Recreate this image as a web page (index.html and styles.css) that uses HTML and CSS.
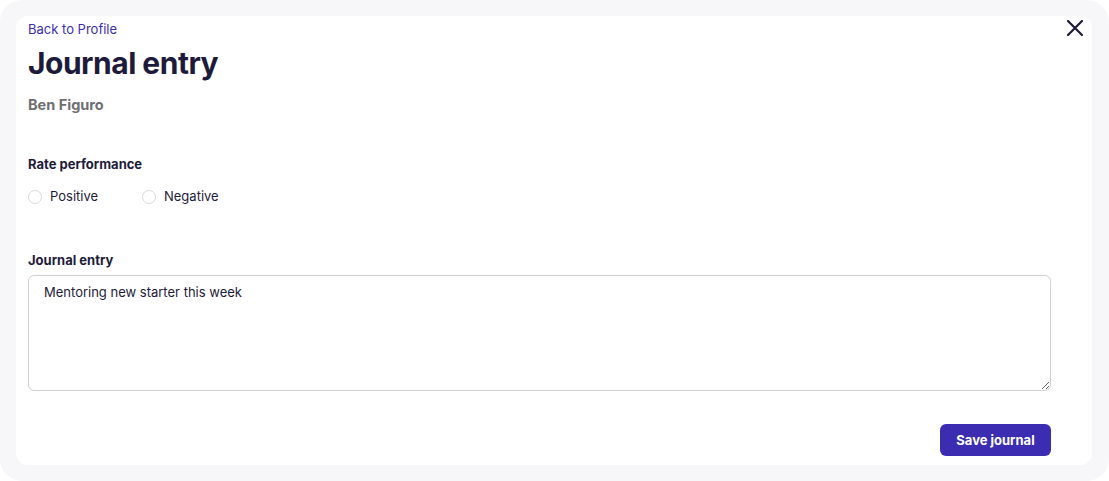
FILE: index.html
```html
<!DOCTYPE html>
<html lang="en">
<head>
  <meta charset="UTF-8">
  <meta name="viewport" content="width=device-width, initial-scale=1.0">
  <link rel="stylesheet" href="styles.css">
</head>
<body>
  <div class="frame">
    <form class="card" id="journal-form">
      <button type="button" class="close" aria-label="Close">
        <svg width="18" height="18" viewBox="0 0 18 18"><path d="M2 2L16 16M16 2L2 16" stroke="#1e1b3a" stroke-width="2.2" stroke-linecap="round"/></svg>
      </button>
      <a href="#" class="back">Back to Profile</a>
      <h1>Journal entry</h1>
      <div class="name">Ben Figuro</div>

      <div class="label rate-label">Rate performance</div>
      <div class="radios">
        <label class="radio"><input type="radio" name="rate" value="positive"><span>Positive</span></label>
        <label class="radio"><input type="radio" name="rate" value="negative"><span>Negative</span></label>
      </div>

      <label class="label entry-label" for="entry">Journal entry</label>
      <textarea id="entry" name="entry">Mentoring new starter this week</textarea>

      <div class="actions">
        <button type="submit" class="save">Save journal</button>
      </div>
    </form>
  </div>
</body>
</html>
```

FILE: styles.css
```css
html, body {
  margin: 0;
  background: #ffffff;
}
body {
  font-family: Inter, "Liberation Sans", sans-serif;
  color: #1e1b3a;
}
.frame {
  background: #f7f7f9;
  border-radius: 22px;
  width: 1109px;
  height: 481px;
  box-sizing: border-box;
  padding: 16px 17px 16px 16px;
}
.card {
  position: relative;
  background: #ffffff;
  border-radius: 12px;
  height: 100%;
  box-sizing: border-box;
  padding: 5px 41px 0 12px;
  display: flex;
  flex-direction: column;
}
.close {
  position: absolute;
  top: 3px;
  right: 8px;
  background: none;
  border: none;
  padding: 0;
  width: 18px;
  height: 18px;
  cursor: pointer;
}
.back {
  color: #3b2cb2;
  font-size: 13px;
  line-height: 17px;
  text-decoration: none;
}
h1 {
  margin: 6px 0 0;
  font-size: 30px;
  line-height: 38px;
  font-weight: 700;
  letter-spacing: -0.5px;
  color: #1e1b3a;
}
.name {
  margin-top: 14px;
  font-size: 14.5px;
  line-height: 18px;
  font-weight: 700;
  color: #6e6e73;
}
.label {
  font-size: 13px;
  line-height: 17px;
  font-weight: 700;
  color: #1e1b3a;
}
.rate-label {
  margin-top: 42px;
}
.radios {
  display: flex;
  gap: 24px;
  margin-top: 15px;
}
.radio {
  display: flex;
  align-items: center;
  gap: 8px;
  font-size: 13px;
  line-height: 17px;
  color: #1e1b3a;
  width: 90px;
}
.radio input {
  appearance: none;
  margin: 0;
  width: 14px;
  height: 14px;
  border: 1px solid #d9d9de;
  border-radius: 50%;
  background: #fff;
}
.entry-label {
  margin-top: 47px;
}
textarea {
  margin-top: 6px;
  height: 116px;
  box-sizing: border-box;
  border: 1px solid #cfcfd4;
  border-radius: 6px;
  padding: 8px 15px;
  font-family: Inter, "Liberation Sans", sans-serif;
  font-size: 13px;
  line-height: 17px;
  color: #1e1b3a;
  resize: vertical;
}
.actions {
  display: flex;
  justify-content: flex-end;
  margin-top: 33px;
}
.save {
  background: #3b2cb2;
  color: #ffffff;
  border: none;
  border-radius: 6px;
  width: 111px;
  height: 32px;
  font-family: Inter, "Liberation Sans", sans-serif;
  font-size: 13px;
  font-weight: 700;
  cursor: pointer;
}
```
